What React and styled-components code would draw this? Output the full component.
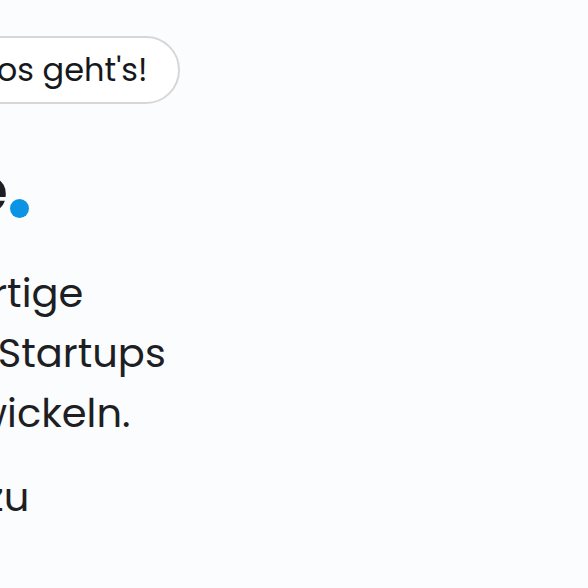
import styled, { createGlobalStyle } from "styled-components";

const GlobalStyle = createGlobalStyle`
  html, body {
    margin: 0;
    padding: 0;
    background: #fbfcfd;
  }
  body {
    font-family: "Poppins", "Noto Sans", sans-serif;
    color: #1e1f24;
    overflow: hidden;
  }
`;

const Page = styled.main`
  width: 588px;
  height: 588px;
  overflow: hidden;
  padding-top: 36px;
  box-sizing: border-box;
`;

// the hero runs past the left edge of the window, as in the screenshot
const Hero = styled.section`
  display: flex;
  flex-direction: column;
  align-items: flex-start;
  margin-left: -213px;
  width: 800px;
`;

const CtaRow = styled.div`
  display: flex;
  align-items: center;
  gap: 20px;
`;

const Button = styled.button`
  box-sizing: border-box;
  height: 68px;
  padding: 0 30px;
  border: 2px solid ${(p) => (p.$primary ? "#0b93e4" : "#d6d7d9")};
  border-radius: 34px;
  background: ${(p) => (p.$primary ? "#0b93e4" : "#ffffff")};
  color: ${(p) => (p.$primary ? "#ffffff" : "#16181c")};
  font-family: inherit;
  font-size: 32px;
  line-height: 1;
  white-space: nowrap;
  cursor: pointer;
`;

const Title = styled.h1`
  margin: 52px 0 0;
  font-size: 63px;
  font-weight: 600;
  line-height: 1.1;
  white-space: nowrap;
`;

const Dot = styled.span`
  display: inline-block;
  width: 19px;
  height: 19px;
  margin-left: 2px;
  vertical-align: -6px;
  border-radius: 50%;
  background: #0b93e4;
`;

const Lead = styled.p`
  margin: ${(p) => p.$top}px 0 0 -1px;
  font-size: 40px;
  line-height: 60px;
  white-space: nowrap;
`;

export default function App() {
  return (
    <>
      <GlobalStyle />
      <Page>
        <Hero>
          <CtaRow>
            <Button $primary>Hallo</Button>
            <Button>Los geht's!</Button>
          </CtaRow>
          <Title>
            Freude
            <Dot />
          </Title>
          <Lead $top={38}>
            Wie großartige
            <br />
            Ideen und Startups
            <br />
            Sie zu entwickeln.
          </Lead>
          <Lead $top={24}>Wir laden zu</Lead>
        </Hero>
      </Page>
    </>
  );
}
